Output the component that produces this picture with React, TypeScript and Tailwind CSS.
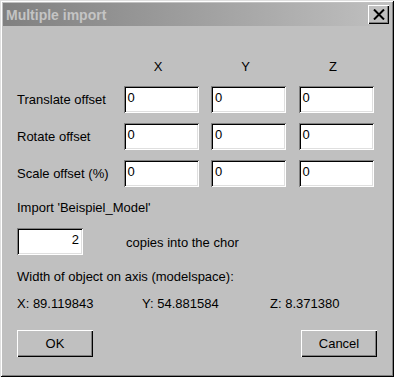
const font = "font-['Liberation_Sans',Arial,sans-serif]"

const sunken =
  "bg-white shadow-[inset_1px_1px_#808080,inset_-1px_-1px_#ffffff,inset_2px_2px_#000000,inset_-2px_-2px_#dfdfdf]"
const raised =
  "bg-[#c0c0c0] shadow-[inset_1px_1px_#ffffff,inset_-1px_-1px_#000000,inset_-2px_-2px_#808080]"

function Field({ value, right }: { value: string; right?: boolean }) {
  return (
    <div className={`${sunken} h-[27px] w-[75px] flex items-center px-[4px] pb-[3px] text-[13px] text-black ${right ? "justify-end" : ""}`}>
      {value}
    </div>
  )
}

function Button({ label }: { label: string }) {
  return (
    <div className={`${raised} h-[27px] w-[76px] flex items-center justify-center text-[13px] text-black`}>
      {label}
    </div>
  )
}

const rows = ["Translate offset", "Rotate offset", "Scale offset (%)"]

export default function App() {
  return (
    <div
      className={`${font} w-[394px] h-[377px] bg-[#c0c0c0] p-[3px] flex flex-col shadow-[inset_1px_1px_#dfdfdf,inset_-1px_-1px_#000000,inset_2px_2px_#ffffff,inset_-2px_-2px_#808080]`}
    >
      <div className="h-[23px] flex items-center justify-between pl-[3px] pr-[2px] bg-gradient-to-r from-[#808080] to-[#c0c0c0]">
        <span className="text-[14px] font-bold text-[#c4c4c4] leading-none">Multiple import</span>
        <div className={`${raised} w-[21px] h-[19px] flex items-center justify-center`}>
          <svg width="12" height="11" viewBox="0 0 12 11">
            <path d="M1 0.5 L11 10.5 M11 0.5 L1 10.5" stroke="#000" strokeWidth="2" />
          </svg>
        </div>
      </div>

      <div className="flex flex-col pl-[14px] pr-[14px] text-[13px] leading-[16px] text-black">
        <div className="mt-[33px] grid grid-cols-[94px_75px_75px_75px] gap-x-[12.5px]">
          <div />
          <div className="text-center pr-[6px]">X</div>
          <div className="text-center pr-[6px]">Y</div>
          <div className="text-center pr-[6px]">Z</div>
        </div>

        <div className="mt-[11px] flex flex-col gap-[10px]">
          {rows.map((r) => (
            <div key={r} className="grid grid-cols-[94px_75px_75px_75px] gap-x-[12.5px] items-center">
              <div className="whitespace-nowrap">{r}</div>
              <Field value="0" />
              <Field value="0" />
              <Field value="0" />
            </div>
          ))}
        </div>

        <div className="mt-[13px]">Import 'Beispiel_Model'</div>

        <div className="mt-[12px] flex items-center">
          <div className={`${sunken} h-[27px] w-[66px] flex items-center justify-end pr-[4px] pb-[3px]`}>2</div>
          <span className="ml-[43px] mt-[2px]">copies into the chor</span>
        </div>

        <div className="mt-[14px]">Width of object on axis (modelspace):</div>

        <div className="mt-[11px] flex">
          <span className="w-[125px]">X: 89.119843</span>
          <span className="w-[128px]">Y: 54.881584</span>
          <span>Z: 8.371380</span>
        </div>

        <div className="mt-[18px] flex justify-between">
          <Button label="OK" />
          <Button label="Cancel" />
        </div>
      </div>
    </div>
  )
}
